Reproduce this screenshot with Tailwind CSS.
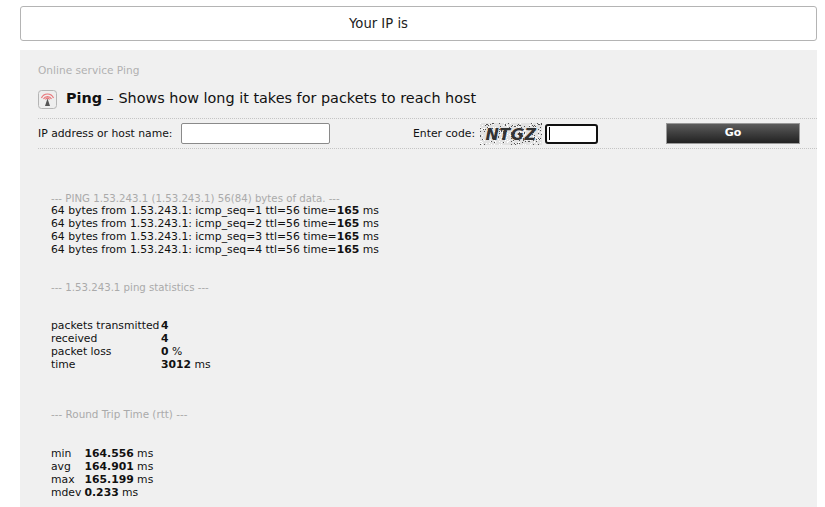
<!DOCTYPE html>
<html lang="en">
<head>
    <meta charset="UTF-8">
    <script src="https://cdn.jsdelivr.net/npm/@tailwindcss/browser@4"></script>
    <title>Ping</title>
</head>
<body class="bg-white h-[507px] overflow-hidden font-['DejaVu_Sans',sans-serif] text-[10.8px] text-[#111]">
    <!-- IP box -->
    <div class="mx-[20px] w-[797px] mt-[6px] h-[35px] border border-[#b4b4b4] rounded-[3px] flex items-center justify-center text-[13.2px] text-[#222]">
        <span class="mr-[80px]">Your IP is</span>
    </div>

    <!-- Panel -->
    <div class="ml-[20px] w-[797px] mt-[9px] h-[457px] bg-[#f0f0f0] pt-[14px]">
        <div class="ml-[18px] text-[10.6px] leading-[13px] text-[#b0b0b0]">Online service Ping</div>

        <div class="ml-[18px] mt-[3px] h-[38px] flex items-center text-[14.4px] text-[#111]">
            <svg class="w-[19px] h-[19px] mr-[9px]" viewBox="0 0 19 19">
                <rect x="0.5" y="0.5" width="18" height="18" rx="3" fill="#eee" stroke="#b5b5b5"/>
                <path d="M3.5 8a6.5 6.5 0 0 1 12 0M5.5 9a4.5 4.5 0 0 1 8 0M7.5 9.5a2.2 2.2 0 0 1 4 0" fill="none" stroke="#e9767a" stroke-width="1.2"/>
                <path d="M9.5 8.5l-2.5 7.5h5z" fill="#555"/>
            </svg>
            <span><b>Ping</b> – Shows how long it takes for packets to reach host</span>
        </div>

        <!-- Form row -->
        <div class="ml-[18px] h-[31px] border-y border-dotted border-[#c4c4c4] flex items-center whitespace-nowrap">
            <span class="w-[143px] pt-[2px]">IP address or host name:</span>
            <input class="w-[149px] h-[21px] bg-white border border-[#8a8a8a] rounded-[2px]" type="text">
            <span class="ml-[83px] w-[65px] pt-[2px]">Enter code:</span>
            <svg class="w-[62px] h-[22px] ml-[2px]" viewBox="0 0 62 22" id="captcha">
                <rect width="62" height="22" fill="#e2e2e2"/>
                <g id="noise" fill="#555"></g>
                <text x="31" y="17" text-anchor="middle" font-family="'DejaVu Sans', sans-serif" font-style="italic" font-weight="700" font-size="16" letter-spacing="0.5" fill="#333">NTGZ</text>
            </svg>
            <div class="ml-[3px] w-[53px] h-[20px] bg-white border-2 border-[#111] rounded-[3px] flex items-center pl-[2px]">
                <div class="w-px h-[13px] bg-black"></div>
            </div>
            <button class="ml-[68px] w-[134px] h-[21px] bg-gradient-to-b from-[#5c5c5c] to-[#222] border border-[#999] text-white text-[11px] font-bold">Go</button>
        </div>

        <!-- Ping output -->
        <div class="ml-[31px] mt-[43px] leading-[13px] whitespace-nowrap">
            <div class="text-[#aaa] text-[10.2px]">--- PING 1.53.243.1 (1.53.243.1) 56(84) bytes of data. ---</div>
            <div class="-mt-px">64 bytes from 1.53.243.1: icmp_seq=1 ttl=56 time=<b>165</b> ms</div>
            <div>64 bytes from 1.53.243.1: icmp_seq=2 ttl=56 time=<b>165</b> ms</div>
            <div>64 bytes from 1.53.243.1: icmp_seq=3 ttl=56 time=<b>165</b> ms</div>
            <div>64 bytes from 1.53.243.1: icmp_seq=4 ttl=56 time=<b>165</b> ms</div>

            <div class="text-[#aaa] text-[10.2px] mt-[25px]">--- 1.53.243.1 ping statistics ---</div>

            <div class="mt-[25px] grid grid-cols-[110px_1fr]">
                <span>packets transmitted</span><span><b>4</b></span>
                <span>received</span><span><b>4</b></span>
                <span>packet loss</span><span><b>0</b> %</span>
                <span>time</span><span><b>3012</b> ms</span>
            </div>

            <div class="text-[#aaa] text-[10.4px] mt-[37px]">--- Round Trip Time (rtt) ---</div>

            <div class="mt-[26px] grid grid-cols-[33.5px_1fr]">
                <span>min</span><span><b>164.556</b> ms</span>
                <span>avg</span><span><b>164.901</b> ms</span>
                <span>max</span><span><b>165.199</b> ms</span>
                <span>mdev</span><span><b>0.233</b> ms</span>
            </div>
        </div>
    </div>

    <script>
        // Captcha speckle, seeded so every load looks the same
        const noise = document.getElementById('noise');
        let seed = 7;
        const rnd = () => (seed = (seed * 16807) % 2147483647) / 2147483647;
        let dots = '';
        for (let i = 0; i < 320; i++) {
            const x = Math.floor(rnd() * 62);
            const y = Math.floor(rnd() * 22);
            const fill = rnd() > 0.45 ? '#fff' : '#555';
            dots += `<rect x="${x}" y="${y}" width="1" height="1" fill="${fill}"/>`;
        }
        noise.innerHTML = dots;
    </script>
</body>
</html>
